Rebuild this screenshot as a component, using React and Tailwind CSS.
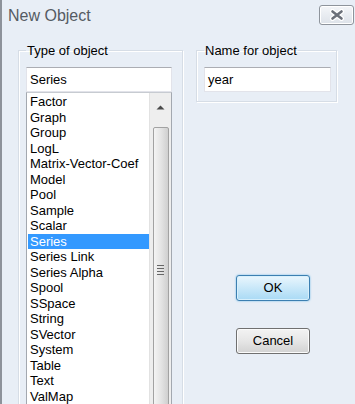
import React from 'react';

const types = [
  'Factor', 'Graph', 'Group', 'LogL', 'Matrix-Vector-Coef', 'Model', 'Pool', 'Sample', 'Scalar',
  'Series', 'Series Link', 'Series Alpha', 'Spool', 'SSpace', 'String', 'SVector', 'System',
  'Table', 'Text', 'ValMap', 'VAR',
];

const font = { fontFamily: '"Liberation Sans", Arial, sans-serif' };

const CloseButton = () => (
  <div className="ml-auto mr-[1px] mt-[-4px] w-[35px] h-[20px] rounded-[3px] border border-[#8e949c] bg-gradient-to-b from-[#f4f6f9] to-[#dde2e9] shadow-[inset_0_0_0_1px_#ffffff] flex items-center justify-center">
    <svg width="16" height="12" viewBox="0 0 16 12">
      <path d="M3.5 2.5 L12.5 9.5 M12.5 2.5 L3.5 9.5" stroke="#ffffff" strokeWidth="5" strokeLinecap="round" />
      <path d="M3.5 2.5 L12.5 9.5 M12.5 2.5 L3.5 9.5" stroke="#6b7079" strokeWidth="2.6" strokeLinecap="round" />
    </svg>
  </div>
);

const GroupBox = ({ label, className, children }) => (
  <fieldset className={`border border-[#d6dde6] shadow-[inset_1px_1px_0_#ffffff,1px_1px_0_#ffffff] pl-[7px] ${className}`}>
    <legend className="px-[1px] text-[13px] leading-[15px] text-black">{label}</legend>
    {children}
  </fieldset>
);

const TextBox = ({ value, className }) => (
  <div className={`h-[25px] bg-white border border-[#e2e3ea] border-t-[#abadb3] flex items-center pl-[3px] text-[13px] text-black ${className}`}>
    {value}
  </div>
);

const Scrollbar = () => (
  <div className="w-[22px] shrink-0 bg-[#eeeeee] border-l border-[#e2e2e2] flex flex-col items-center">
    <div className="h-[36px] w-full flex items-center justify-center pb-[6px]">
      <svg width="9" height="5" viewBox="0 0 9 5">
        <path d="M0.5 4.5 L4.5 0.5 L8.5 4.5 Z" fill="#4a4a4a" />
      </svg>
    </div>
    <div className="w-[16px] h-[400px] rounded-[2px] border border-[#a2a2a2] bg-gradient-to-r from-[#f4f4f4] via-[#e4e4e4] to-[#cfcfcf] flex flex-col items-center pt-[137px]">
      <div className="flex flex-col gap-[2px]">
        <div className="w-[7px] h-[1px] bg-[#666]" />
        <div className="w-[7px] h-[1px] bg-[#666]" />
        <div className="w-[7px] h-[1px] bg-[#666]" />
        <div className="w-[7px] h-[1px] bg-[#666]" />
      </div>
    </div>
  </div>
);

export default function App() {
  return (
    <div className="w-[355px] h-[404px] overflow-hidden bg-[#e8eef6] border-l-2 border-[#8d929a] flex flex-col" style={font}>
      <div className="h-[34px] shrink-0 flex items-center pl-[6px]">
        <span className="text-[16px] text-[#555b63] mt-[-3px]">New Object</span>
        <CloseButton />
      </div>
      <div className="flex pl-[16px] pt-[9px]">
        <GroupBox label="Type of object" className="w-[164px] pr-[10px] pt-[9px] h-[500px]">
          <TextBox value="Series" className="w-[146px]" />
          <div className="w-[146px] h-[420px] bg-white border border-[#a3a8b0] border-t-[#c7cbd1] flex">
            <ul className="flex-1 pl-[1px] pt-[1px]">
              {types.map((t) => (
                <li
                  key={t}
                  className={`h-[15.5px] leading-[15.5px] text-[13px] pl-[2px] whitespace-nowrap ${
                    t === 'Series' ? 'bg-[#3399ff] text-white' : 'text-black'
                  }`}
                >
                  {t}
                </li>
              ))}
            </ul>
            <Scrollbar />
          </div>
        </GroupBox>
        <div className="ml-[13px] flex flex-col">
          <GroupBox label="Name for object" className="w-[141px] pt-[9px] pb-[9px]">
            <TextBox value="year" className="w-[127px]" />
          </GroupBox>
          <button className="ml-[40px] mt-[173px] w-[74px] h-[26px] rounded-[3px] border border-[#3c7fb1] bg-gradient-to-b from-[#eaf6fd] via-[#c9e8f9] to-[#a9daf5] shadow-[0_0_2px_#5fb5e8,inset_0_0_0_1px_#d8f0fc] text-[13px] text-black">
            OK
          </button>
          <button className="ml-[40px] mt-[27px] w-[74px] h-[26px] rounded-[3px] border border-[#707070] bg-gradient-to-b from-[#f3f3f3] via-[#e6e6e6] to-[#d2d2d2] shadow-[inset_0_0_0_1px_#fbfbfb] text-[13px] text-black">
            Cancel
          </button>
        </div>
      </div>
    </div>
  );
}
